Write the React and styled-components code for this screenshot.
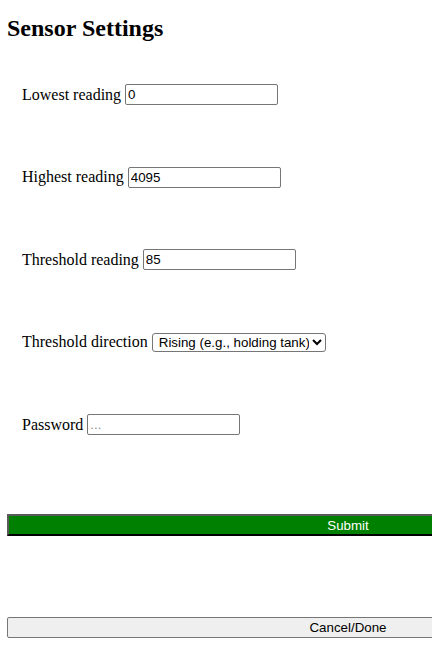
import React from 'react'
import styled, { createGlobalStyle } from 'styled-components'

const Global = createGlobalStyle`
    html, body {
        margin: 0;
        overflow: hidden;
        background: #fff;
    }
    body {
        font-family: "Liberation Serif", "Times New Roman", serif;
        font-size: 16px;
        color: #000;
    }
`

const Page = styled.div`
    padding: 14px 0 0 7px;
    width: 700px;
`

const Title = styled.h1`
    margin: 0;
    font-size: 24px;
    line-height: 28px;
    font-weight: bold;
`

const Form = styled.form`
    display: flex;
    flex-direction: column;
    gap: 61.5px;
    padding-top: 42px;
`

const Row = styled.div`
    height: 21px;
    display: flex;
    align-items: center;
    padding-left: 15px;
    white-space: pre;
`

const Field = styled.input`
    box-sizing: border-box;
    width: 153px;
    height: 21px;
    padding: 1px 2px;
    border: 1px solid #767676;
    border-radius: 2px;
    font-family: "Liberation Sans", Arial, sans-serif;
    font-size: 13.33px;
    color: #000;
    &::placeholder {
        color: #8a8a8a;
    }
`

const Picker = styled.select`
    box-sizing: border-box;
    height: 19px;
    width: 174px;
    padding: 0 0 0 2px;
    border: 1px solid #767676;
    border-radius: 3px;
    background: #fff;
    font-family: "Liberation Sans", Arial, sans-serif;
    font-size: 13.33px;
    color: #000;
`

const Button = styled.button`
    box-sizing: border-box;
    width: 682px;
    height: ${p => (p.primary ? '22px' : '21px')};
    margin-top: ${p => p.offset}px;
    font-family: "Liberation Sans", Arial, sans-serif;
    font-size: 13.33px;
    padding: 0;
    background: ${p => (p.primary ? '#008000' : '#efefef')};
    color: ${p => (p.primary ? '#fff' : '#000')};
    border: ${p => (p.primary ? '2px solid' : '1px solid #767676')};
    border-color: ${p => (p.primary ? '#5a5a5a #000 #000 #5a5a5a' : '#767676')};
    border-radius: ${p => (p.primary ? '0' : '2px')};
    display: block;
`

export default function App() {
    return (
        <Page>
            <Global />
            <Title>Sensor Settings</Title>
            <Form onSubmit={e => e.preventDefault()}>
                <Row>Lowest reading <Field defaultValue="0" /></Row>
                <Row>Highest reading <Field defaultValue="4095" /></Row>
                <Row>Threshold reading <Field defaultValue="85" /></Row>
                <Row>
                    Threshold direction{' '}
                    <Picker defaultValue="rising">
                        <option value="rising">Rising (e.g., holding tank)</option>
                        <option value="falling">Falling</option>
                    </Picker>
                </Row>
                <Row>Password <Field type="password" placeholder="..." /></Row>
            </Form>
            <Button primary offset={79}>Submit</Button>
            <Button offset={81}>Cancel/Done</Button>
        </Page>
    )
}
